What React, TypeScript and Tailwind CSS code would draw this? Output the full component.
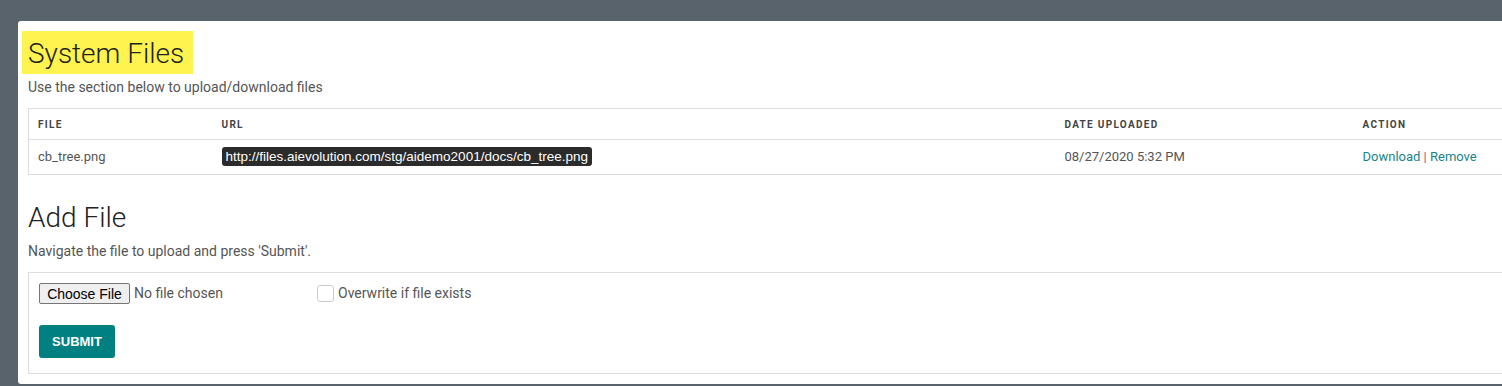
const rows = [
  {
    file: 'cb_tree.png',
    url: 'http://files.aievolution.com/stg/aidemo2001/docs/cb_tree.png',
    date: '08/27/2020 5:32 PM',
  },
]

const font = "font-['Roboto','Liberation_Sans',sans-serif]"

export default function App() {
  return (
    <div className={`h-[386px] overflow-hidden bg-[#59636b] pl-[18px] pt-[21px] ${font}`}>
      <div className="w-[1520px] rounded-[3px] bg-white pb-[10px] pl-[10px] pt-[10px]">
        <h1 className="-ml-[6px] inline-block h-[43px] bg-[#fff350] pl-[6px] pr-[9px] pt-[2px] text-[28px] font-light leading-[41px] text-[#222]">
          System Files
        </h1>
        <p className="mt-[3px] text-[14px] leading-[20px] text-[#555]">
          Use the section below to upload/download files
        </p>

        <table className="mt-[11px] w-[1500px] border-collapse border border-[#ddd] text-left">
          <thead>
            <tr className="h-[31px] border-b border-[#ddd]">
              <th className="w-[184px] pl-[9px] text-[10px] font-bold tracking-[1.3px] text-[#444]">FILE</th>
              <th className="w-[843px] pl-[9px] text-[10px] font-bold tracking-[1.3px] text-[#444]">URL</th>
              <th className="w-[298px] pl-[9px] text-[10px] font-bold tracking-[1.3px] text-[#444]">DATE UPLOADED</th>
              <th className="pl-[9px] text-[10px] font-bold tracking-[1.3px] text-[#444]">ACTION</th>
            </tr>
          </thead>
          <tbody>
            {rows.map((r) => (
              <tr key={r.file} className="h-[35px] text-[13px] text-[#555]">
                <td className="pl-[9px]">{r.file}</td>
                <td className="pl-[9px]">
                  <span className="inline-block rounded-[3px] bg-[#2b2b2b] px-[4px] font-['Liberation_Sans',Arial,sans-serif] text-[13.5px] leading-[19px] text-white">
                    {r.url}
                  </span>
                </td>
                <td className="pl-[9px]">{r.date}</td>
                <td className="pl-[9px]">
                  <a className="text-[#17858a]">Download</a>
                  <span className="text-[#a9507a]"> | </span>
                  <a className="text-[#17858a]">Remove</a>
                </td>
              </tr>
            ))}
          </tbody>
        </table>

        <h2 className="mt-[26px] text-[28px] font-light leading-[34px] text-[#222]">Add File</h2>
        <p className="mt-[6px] text-[14px] leading-[20px] text-[#555]">
          Navigate the file to upload and press 'Submit'.
        </p>

        <div className="mt-[11px] w-[1500px] border border-[#ddd] pb-[15px] pl-[10px] pt-[10px]">
          <div className="flex items-center">
            <div className="flex w-[278px] items-center">
              <button
                type="button"
                className="h-[21px] w-[91px] rounded-[2px] border border-[#767676] bg-[#efefef] font-['Liberation_Sans',Arial,sans-serif] text-[14px] text-black"
              >
                Choose File
              </button>
              <span className="ml-[4px] text-[14px] text-[#555]">No file chosen</span>
            </div>
            <label className="flex items-center text-[14px] text-[#555]">
              <span className="mr-[4px] h-[17px] w-[17px] rounded-[3px] border border-[#ccc] bg-white" />
              Overwrite if file exists
            </label>
          </div>
          <button
            type="button"
            className="mt-[21px] h-[33px] w-[76px] rounded-[3px] bg-[#008080] font-['Liberation_Sans',Arial,sans-serif] text-[13px] font-bold text-white"
          >
            SUBMIT
          </button>
        </div>
      </div>
    </div>
  )
}
